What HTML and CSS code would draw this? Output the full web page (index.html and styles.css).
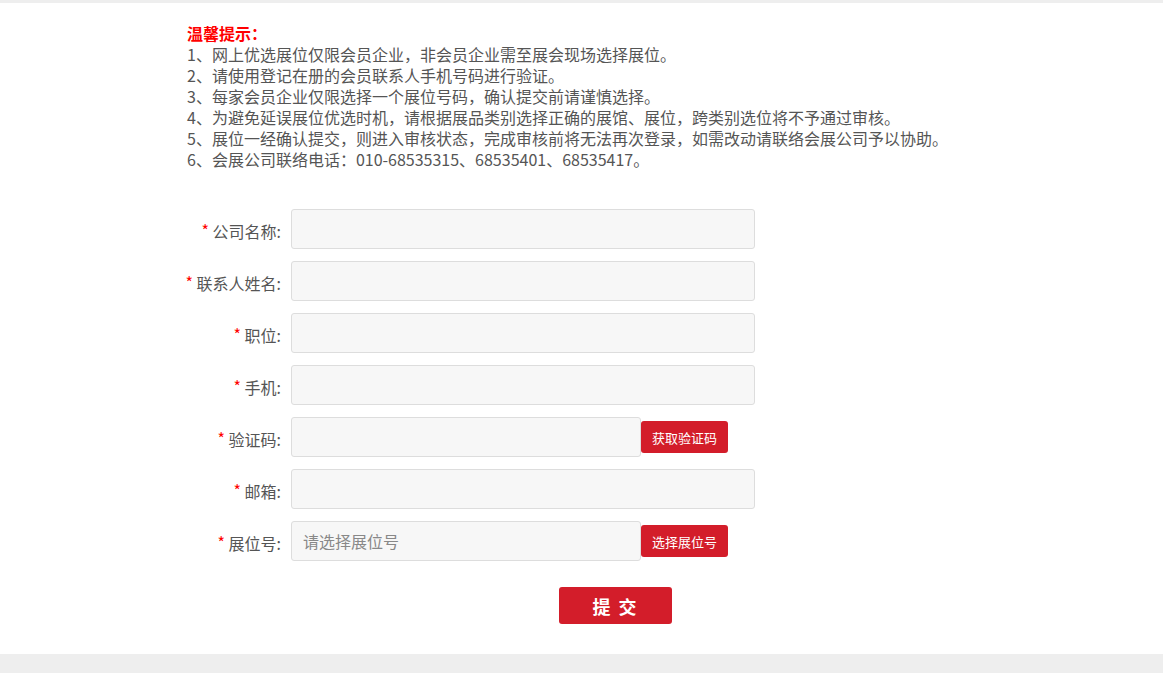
FILE: index.html
```html
<!DOCTYPE html>
<html lang="zh-CN">
<head>
<meta charset="utf-8">
<title>展位优选</title>
<link rel="stylesheet" href="styles.css">
</head>
<body>
<div class="topbar"></div>
<div class="main">
  <div class="tips">
    <div class="tips-title">温馨提示：</div>
    <p>1、网上优选展位仅限会员企业，非会员企业需至展会现场选择展位。</p>
    <p>2、请使用登记在册的会员联系人手机号码进行验证。</p>
    <p>3、每家会员企业仅限选择一个展位号码，确认提交前请谨慎选择。</p>
    <p>4、为避免延误展位优选时机，请根据展品类别选择正确的展馆、展位，跨类别选位将不予通过审核。</p>
    <p>5、展位一经确认提交，则进入审核状态，完成审核前将无法再次登录，如需改动请联络会展公司予以协助。</p>
    <p>6、会展公司联络电话：010-68535315、68535401、68535417。</p>
  </div>
  <form class="form">
    <div class="row">
      <label class="label"><span class="req">*</span> 公司名称:</label>
      <input class="field" type="text">
    </div>
    <div class="row">
      <label class="label"><span class="req">*</span> 联系人姓名:</label>
      <input class="field" type="text">
    </div>
    <div class="row">
      <label class="label"><span class="req">*</span> 职位:</label>
      <input class="field" type="text">
    </div>
    <div class="row">
      <label class="label"><span class="req">*</span> 手机:</label>
      <input class="field" type="text">
    </div>
    <div class="row">
      <label class="label"><span class="req">*</span> 验证码:</label>
      <input class="field field-short" type="text">
      <button type="button" class="side-btn">获取验证码</button>
    </div>
    <div class="row">
      <label class="label"><span class="req">*</span> 邮箱:</label>
      <input class="field" type="text">
    </div>
    <div class="row">
      <label class="label"><span class="req">*</span> 展位号:</label>
      <input class="field field-short" type="text" placeholder="请选择展位号">
      <button type="button" class="side-btn">选择展位号</button>
    </div>
    <div class="submit-row">
      <button type="button" class="submit">提 交</button>
    </div>
  </form>
</div>
<div class="footer"></div>
</body>
</html>
```
FILE: styles.css
```css
html, body {
  margin: 0;
  padding: 0;
  background: #fff;
}
body {
  font-family: "Noto Sans CJK SC", "Noto Sans", sans-serif;
  color: #555;
  overflow: hidden;
}
.topbar {
  height: 3px;
  background: #eeeeee;
}
.main {
  width: 789px;
  margin: 0 auto;
  padding-top: 20px;
}
.tips {
  font-size: 16px;
  line-height: 21px;
  color: #555;
}
.tips-title {
  color: #ff0000;
  font-weight: bold;
}
.tips p {
  margin: 0;
}
.form {
  margin-top: 39px;
  margin-left: -20px;
}
.row {
  display: flex;
  align-items: center;
  height: 40px;
  margin-bottom: 12px;
}
.label {
  width: 114px;
  margin-right: 10px;
  text-align: right;
  font-size: 16px;
  color: #555;
  padding-top: 3px;
  white-space: nowrap;
}
.req {
  color: #ff0000;
  font-size: 16px;
  position: relative;
  top: -1px;
}
.field {
  box-sizing: border-box;
  width: 464px;
  height: 40px;
  border: 1px solid #dddddd;
  border-radius: 3px;
  background: #f7f7f7;
  padding: 0 11px;
  font-family: inherit;
  font-size: 16px;
  color: #555;
  outline: none;
}
.field::placeholder {
  color: #888;
}
.field-short {
  width: 350px;
}
.side-btn {
  box-sizing: border-box;
  width: 87px;
  height: 32px;
  border: none;
  border-radius: 3px;
  background: #d31d2a;
  color: #fff;
  font-family: inherit;
  font-size: 13px;
  padding: 0;
  cursor: pointer;
}
.submit-row {
  padding-left: 392px;
  padding-top: 14px;
}
.submit {
  width: 113px;
  height: 37px;
  border: none;
  border-radius: 3px;
  background: #d31d2a;
  color: #fff;
  font-family: inherit;
  font-size: 18px;
  font-weight: bold;
  letter-spacing: 2px;
  padding: 0;
  cursor: pointer;
}
.footer {
  margin-top: 30px;
  height: 60px;
  background: #eeeeee;
}
```
